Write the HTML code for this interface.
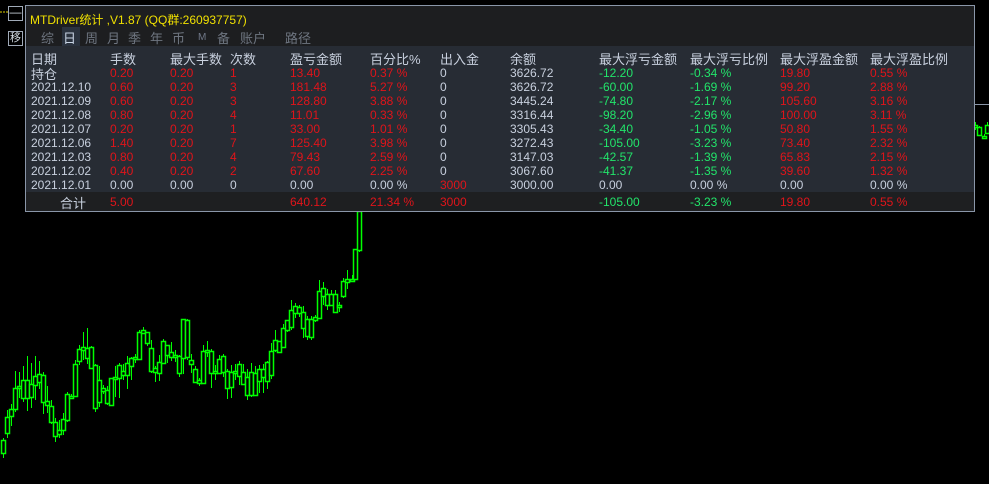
<!DOCTYPE html>
<html><head><meta charset="utf-8"><style>
body{margin:0;width:989px;height:484px;background:#000;position:relative;overflow:hidden;font-family:"Liberation Sans","Noto Sans CJK SC",sans-serif;}
.a{position:absolute;white-space:nowrap;}
#panel{position:absolute;left:25px;top:5px;width:948px;height:205px;border:1px solid #8a96a8;background:#1d1e20;}
#tbl{position:absolute;left:0;top:40px;width:948px;height:146px;background:#272c34;}
#tot{position:absolute;left:0;top:186px;width:948px;height:19px;background:#1e1f21;}
.t{font-size:12px;color:#c8d0de;}
.r{color:#e0141a;}.g{color:#22e46a;}
.h{font-size:13px;color:#c8d0de;}
.tab{font-size:13px;color:#6e7580;top:22px;}
</style></head><body>
<svg width="989" height="484" style="position:absolute;left:0;top:0">
<line x1="0" y1="12" x2="8" y2="12" stroke="#e0d000" stroke-dasharray="2,1"/>
<line x1="974" y1="104.5" x2="989" y2="104.5" stroke="#8a96a8"/>
<g id="c"></g>
</svg>
<div class="a" style="left:8px;top:6px;width:13px;height:13px;border:1px solid #a0aab8;color:#d0d8e0;font-size:12px;line-height:11px;text-align:center">—</div>
<div class="a" style="left:8px;top:31px;width:13px;height:13px;border:1px solid #a0aab8;color:#d0d8e0;font-size:11px;line-height:13px;text-align:center">移</div>
<div id="panel">
<div class="a" style="left:4px;top:5px;font-size:12px;color:#f0e000">MTDriver统计 ,V1.87 (QQ群:260937757)</div>
<div class="a" style="left:36px;top:21px;width:18px;height:19px;background:#2a323e"></div>
<div class="a tab" style="left:15px">综</div>
<div class="a tab" style="left:37px;color:#c8d4e4">日</div>
<div class="a tab" style="left:59px">周</div>
<div class="a tab" style="left:81px">月</div>
<div class="a tab" style="left:102px">季</div>
<div class="a tab" style="left:124px">年</div>
<div class="a tab" style="left:146px">币</div>
<div class="a tab" style="left:172px;font-size:10px;top:26px;color:#707888">M</div>
<div class="a tab" style="left:191px">备</div>
<div class="a tab" style="left:214px">账户</div>
<div class="a tab" style="left:259px">路径</div>
<div id="tbl"></div><div id="tot"></div>
</div>
<div id="rows">
<div class="a h" style="left:31px;top:49px">日期</div><div class="a h" style="left:110px;top:49px">手数</div><div class="a h" style="left:170px;top:49px">最大手数</div><div class="a h" style="left:230px;top:49px">次数</div><div class="a h" style="left:290px;top:49px">盈亏金额</div><div class="a h" style="left:370px;top:49px">百分比%</div><div class="a h" style="left:440px;top:49px">出入金</div><div class="a h" style="left:510px;top:49px">余额</div><div class="a h" style="left:599px;top:49px">最大浮亏金额</div><div class="a h" style="left:690px;top:49px">最大浮亏比例</div><div class="a h" style="left:780px;top:49px">最大浮盈金额</div><div class="a h" style="left:870px;top:49px">最大浮盈比例</div>
</div>
<script>
var rows=[
["持仓","0.20","0.20","1","13.40","0.37 %","0","3626.72","-12.20","-0.34 %","19.80","0.55 %"],
["2021.12.10","0.60","0.20","3","181.48","5.27 %","0","3626.72","-60.00","-1.69 %","99.20","2.88 %"],
["2021.12.09","0.60","0.20","3","128.80","3.88 %","0","3445.24","-74.80","-2.17 %","105.60","3.16 %"],
["2021.12.08","0.80","0.20","4","11.01","0.33 %","0","3316.44","-98.20","-2.96 %","100.00","3.11 %"],
["2021.12.07","0.20","0.20","1","33.00","1.01 %","0","3305.43","-34.40","-1.05 %","50.80","1.55 %"],
["2021.12.06","1.40","0.20","7","125.40","3.98 %","0","3272.43","-105.00","-3.23 %","73.40","2.32 %"],
["2021.12.03","0.80","0.20","4","79.43","2.59 %","0","3147.03","-42.57","-1.39 %","65.83","2.15 %"],
["2021.12.02","0.40","0.20","2","67.60","2.25 %","0","3067.60","-41.37","-1.35 %","39.60","1.32 %"],
["2021.12.01","0.00","0.00","0","0.00","0.00 %","3000","3000.00","0.00","0.00 %","0.00","0.00 %"]];
var xs=[31,110,170,230,290,370,440,510,599,690,780,870],h="";
rows.forEach(function(r,i){var y=66+i*14,z=i==8;
r.forEach(function(v,j){var c="";
if(j>=1&&j<=5)c=z?"":"r";if(j==6)c=z?"r":"";if(j==8||j==9)c=z?"":"g";if(j>=10)c=z?"":"r";
var fs=(i==0&&j==0)?"font-size:13px;":"";var yy=(i==0&&j==0)?64:y;
h+='<div class="a t '+c+'" style="'+fs+'left:'+xs[j]+'px;top:'+yy+'px">'+v+'</div>';});});
var tot=[[60,"合计",""],[110,"5.00","r"],[290,"640.12","r"],[370,"21.34 %","r"],[440,"3000","r"],[599,"-105.00","g"],[690,"-3.23 %","g"],[780,"19.80","r"],[870,"0.55 %","r"]];
tot.forEach(function(t){var k=t[1]=="合计";h+='<div class="a t '+t[2]+'" style="left:'+t[0]+'px;top:'+(k?193:195)+'px;'+(k?"font-size:13px;":"")+'">'+t[1]+'</div>';});
document.getElementById("rows").insertAdjacentHTML("beforeend",h);
var C=[[3,440,453,438,458],[7,417,433,410,438],[11,409,416,404,426],[15,388,409,371,412],[19,386,388,372,398],[23,380,398,366,402],[27,380,398,356,411],[31,384,397,363,408],[35,376,385,356,400],[39,374,382,361,389],[43,375,402,372,414],[47,401,405,386,413],[51,406,422,400,424],[55,422,436,418,442],[59,430,434,420,438],[63,419,430,413,435],[67,394,420,392,422],[71,396,398,394,399],[75,364,396,360,397],[79,349,361,345,365],[83,347,350,332,360],[87,348,358,328,364],[91,347,368,346,368],[95,365,408,364,412],[99,380,402,366,407],[103,388,391,385,394],[107,390,403,386,405],[111,378,405,378,406],[115,377,379,366,397],[119,365,378,363,398],[123,371,375,364,380],[127,363,375,356,389],[131,358,366,357,380],[135,357,359,354,363],[139,332,359,330,360],[143,330,333,327,334],[147,332,343,332,346],[151,348,371,340,373],[155,368,372,366,382],[159,362,373,355,381],[163,341,363,339,364],[167,345,355,345,363],[171,352,357,342,361],[175,355,357,350,362],[179,356,373,355,377],[183,319,358,319,374],[187,320,357,319,360],[191,360,364,354,373],[195,369,382,366,382],[199,380,383,378,386],[203,351,383,345,384],[207,350,352,341,357],[211,351,373,349,388],[215,371,373,365,380],[219,359,373,355,373],[223,356,372,354,377],[227,371,388,369,399],[231,372,387,365,398],[235,371,373,364,380],[239,364,376,361,385],[243,372,384,364,384],[247,377,395,369,400],[251,372,395,363,397],[255,373,395,366,396],[259,369,381,365,393],[263,369,377,364,393],[267,362,381,361,389],[271,351,375,343,379],[275,340,350,330,352],[279,341,352,341,352],[283,328,347,324,346],[287,320,330,320,332],[291,310,327,300,330],[295,306,313,303,318],[299,307,313,305,317],[303,312,328,306,338],[307,319,336,316,340],[311,319,337,316,340],[315,317,320,315,322],[319,291,318,280,319],[323,288,296,282,305],[327,294,305,289,310],[331,294,305,290,305],[335,294,312,290,313],[339,305,307,302,312],[343,281,296,278,298],[347,279,282,270,289],[352,279,281,275,282],[355,249,279,249,280],[359,211,250,211,252],[975,125,127,122,130],[979,127,135,126,136],[984,136,138,134,139],[987,125,133,122,134]];
var s="";C.forEach(function(c){s+='<line x1="'+(c[0]+.5)+'" y1="'+c[3]+'" x2="'+(c[0]+.5)+'" y2="'+c[4]+'" style="stroke:#00ff00;stroke-width:1"/><rect x="'+(c[0]-1.5)+'" y="'+(c[1]+.5)+'" width="4" height="'+Math.max(1,c[2]-c[1])+'" style="fill:#000;stroke:#00ff00;stroke-width:1.5"/>';});
document.getElementById("c").innerHTML=s;
</script>
</body></html>
